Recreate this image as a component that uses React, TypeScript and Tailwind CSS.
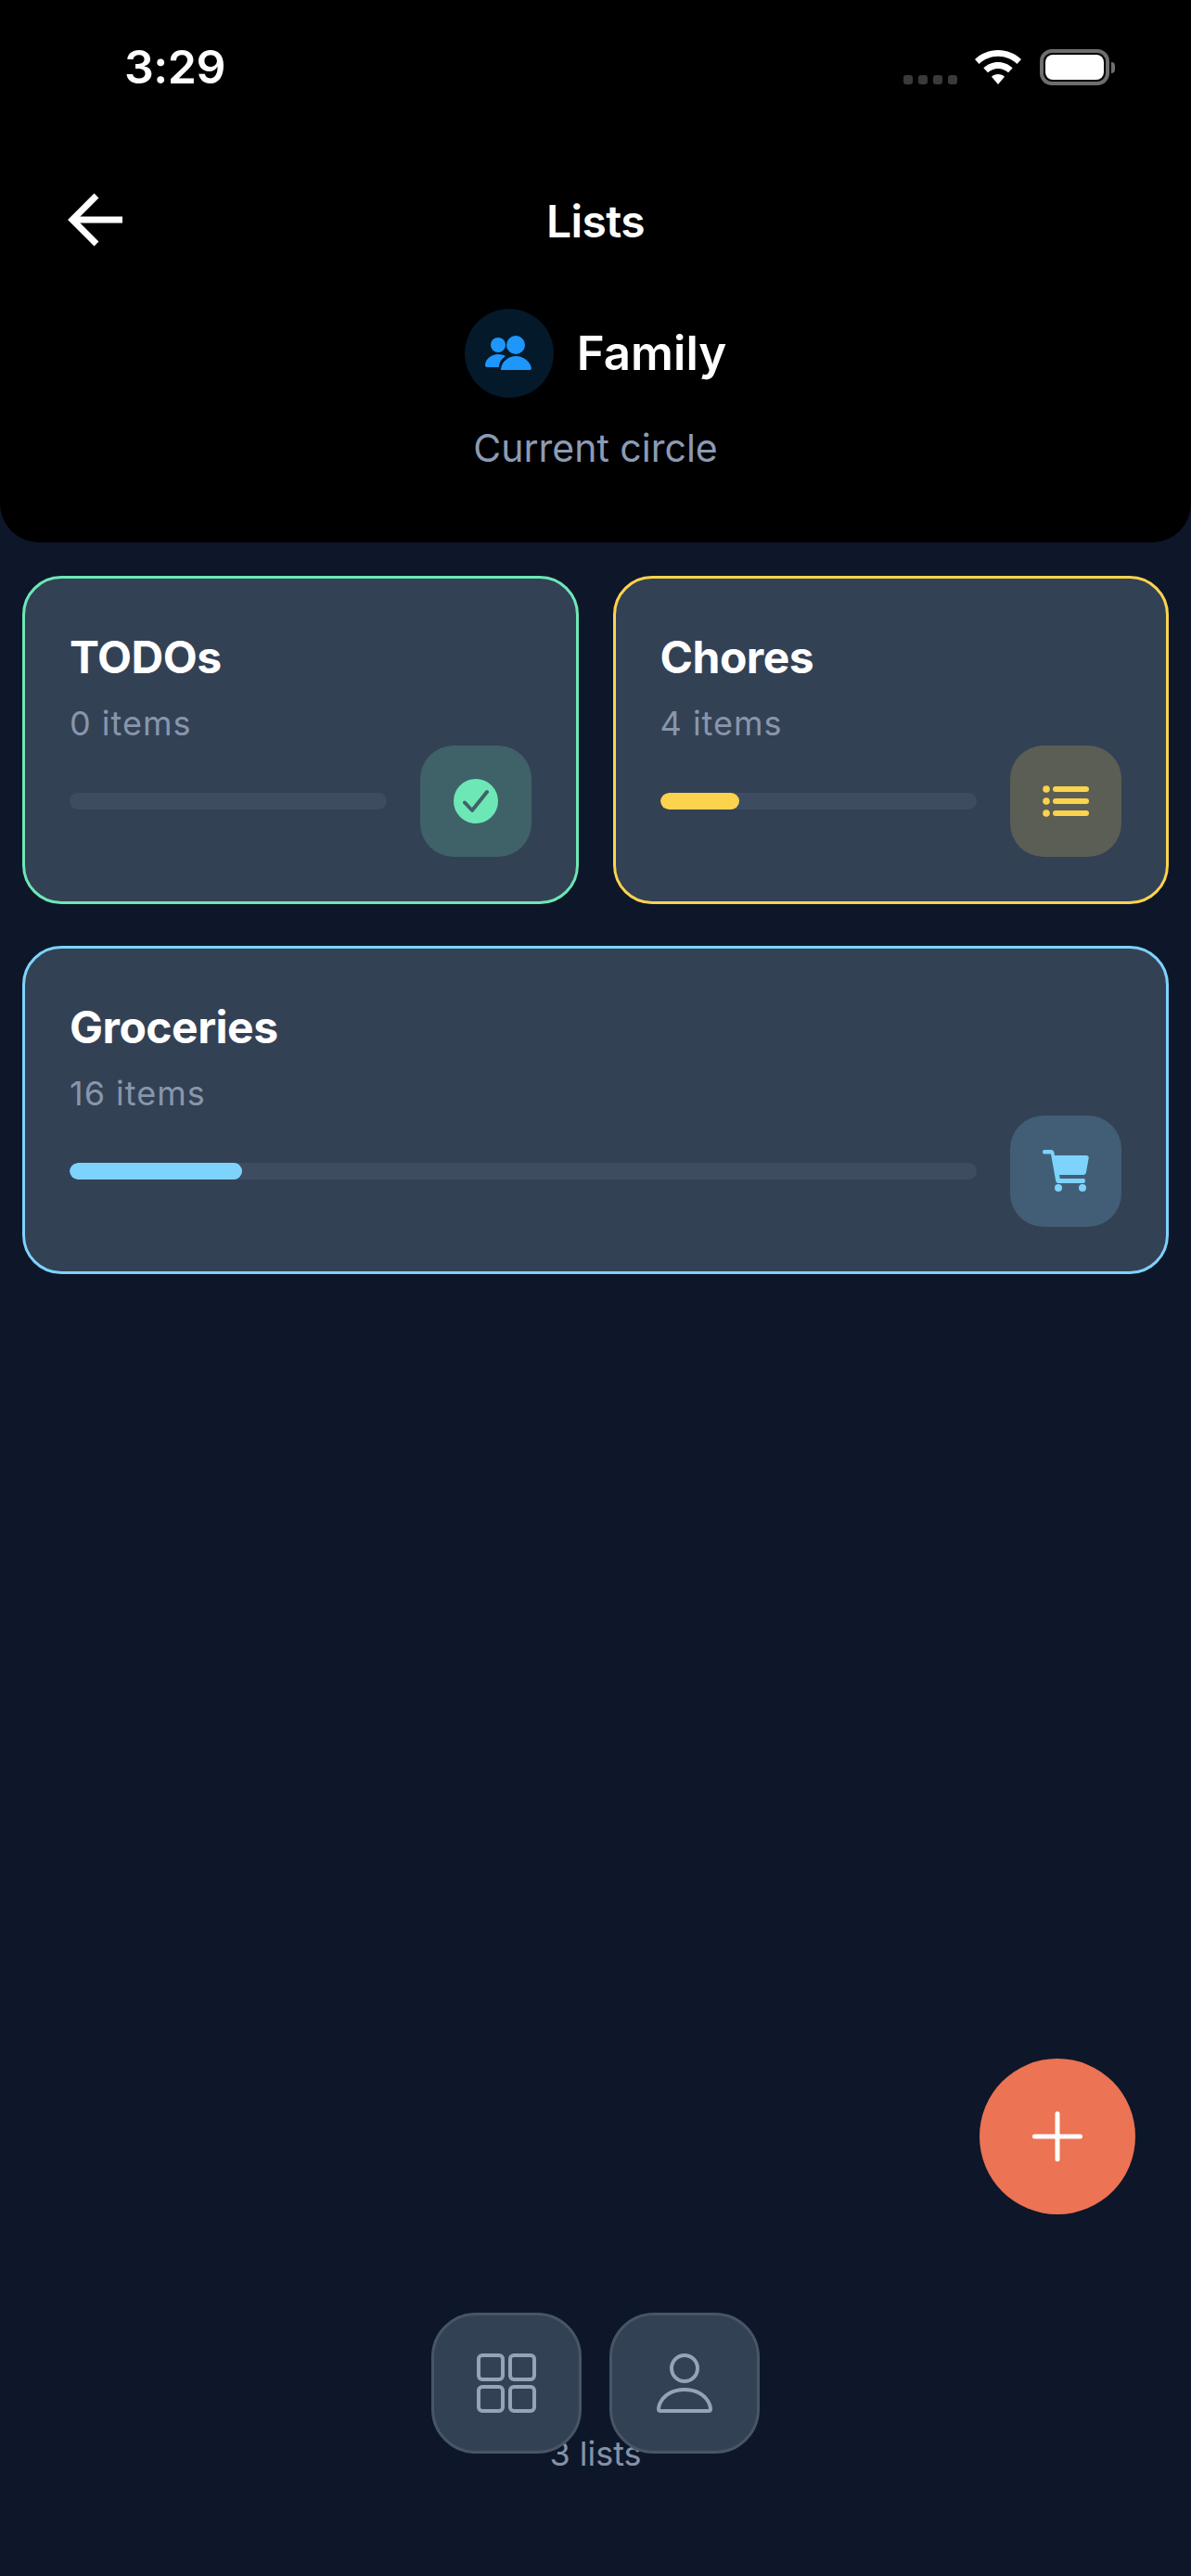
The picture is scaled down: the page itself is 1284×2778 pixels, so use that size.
import React from "react";

const GroupIcon = () => (
  <svg width="52" height="38" viewBox="0 0 52 38" fill="#1e96fc">
    <circle cx="14" cy="10" r="8" />
    <circle cx="33" cy="10" r="10" />
    <path d="M0 32c0-7 7-12 14-12 3 0 6 .8 8 2-4 3-6.500 6-6.900 11 0 .7-.5 1-1.100 1H2c-1.200 0-2-.8-2-2z" />
    <path d="M17 37c0-.5 0-1 .2-2 1-7 8-13 16-13s15 6 16.500 12c.4 1.700 0 3-1.700 3z" />
  </svg>
);

const CheckIcon = () => (
  <svg width="48" height="48" viewBox="0 0 48 48" fill="none">
    <circle cx="24" cy="24" r="24" fill="#6ee7b7" />
    <path d="M12 25.500 20 34 36 14" stroke="#3f6269" strokeWidth="4" strokeLinecap="round" strokeLinejoin="round" />
  </svg>
);

const ListIcon = () => (
  <svg width="50" height="34" viewBox="0 0 50 34" fill="#fcd34d">
    <circle cx="4" cy="4" r="3.800" />
    <circle cx="4" cy="17" r="3.800" />
    <circle cx="4" cy="30" r="3.800" />
    <rect x="11" y="1" width="39" height="6" rx="3" />
    <rect x="11" y="14" width="39" height="6" rx="3" />
    <rect x="11" y="27" width="39" height="6" rx="3" />
  </svg>
);

const CartIcon = () => (
  <svg width="50" height="46" viewBox="0 0 50 46" fill="#7dd3fc">
    <path d="M2 0H9c2 0 3 1 3.500 3l.5 3H47c2 0 3 1.500 2.700 3L47 24c-.3 2-1.500 3-3 3H18l.7 4H44c1.300 0 2 .8 2 2.200S45.300 36 44 36H17c-1.500 0-2.500-1-2.800-2.500L9 4.500H2C.8 4.500 0 3.500 0 2.200S.8 0 2 0z" />
    <circle cx="17" cy="41" r="4" />
    <circle cx="43" cy="41" r="4" />
  </svg>
);

const GridIcon = () => (
  <svg width="64" height="64" viewBox="0 0 64 64" fill="none" stroke="#94a3b8" strokeWidth="4">
    <rect x="2" y="2" width="26" height="26" rx="4" />
    <rect x="36" y="2" width="26" height="26" rx="4" />
    <rect x="2" y="36" width="26" height="26" rx="4" />
    <rect x="36" y="36" width="26" height="26" rx="4" />
  </svg>
);

const PersonIcon = () => (
  <svg width="60" height="64" viewBox="0 0 60 64" fill="none" stroke="#94a3b8" strokeWidth="4" strokeLinejoin="round">
    <circle cx="30" cy="16" r="14" />
    <path d="M2 60c0-2 .5-3.500 1-5 4-10 14-16 27-16s23 6 27 16c.5 1.500 1 3 1 5 0 1.300-.7 2-2 2H4c-1.300 0-2-.7-2-2z" />
  </svg>
);

function Card({ title, sub, border, iconBg, fill, pct, icon, className }: {
  title: string; sub: string; border: string; iconBg: string; fill: string; pct: string; icon: React.ReactNode; className?: string;
}) {
  return (
    <div className={`rounded-[42px] border-[3px] bg-[#334155] p-[48px] h-[354px] ${border} ${className ?? ""}`}>
      <div className="text-[48px] leading-[74px] h-[72px] font-bold tracking-[-0.5px] text-white">{title}</div>
      <div className="mt-[12px] text-[36px] leading-[48px] tracking-[1px] text-[#8896ab]">{sub}</div>
      <div className="flex items-center gap-[36px]">
        <div className="flex-1 h-[18px] rounded-full bg-[#3e4c62] overflow-hidden">
          <div className={`h-full rounded-full ${fill} ${pct}`} />
        </div>
        <div className={`w-[120px] h-[120px] rounded-[36px] flex items-center justify-center ${iconBg}`}>{icon}</div>
      </div>
    </div>
  );
}

export default function App() {
  return (
    <div className="relative w-[1284px] h-[2778px] bg-[#0e1729] overflow-hidden font-['Inter',sans-serif]">
      <header className="h-[585px] bg-black rounded-b-[42px] flex flex-col">
        <div className="h-[191px] pt-[39px] pl-[134px] pr-[82px] flex items-start justify-between">
          <span className="text-[50px] leading-[66px] font-semibold text-white tracking-[-0.5px]">3:29</span>
          <div className="flex items-start mt-[14px]">
            <div className="flex gap-[6px] mt-[28px]">
              <span className="w-[10px] h-[10px] rounded-[3px] bg-[#3a3a3a]" />
              <span className="w-[10px] h-[10px] rounded-[3px] bg-[#3a3a3a]" />
              <span className="w-[10px] h-[10px] rounded-[3px] bg-[#3a3a3a]" />
              <span className="w-[10px] h-[10px] rounded-[3px] bg-[#3a3a3a]" />
            </div>
            <svg className="ml-[19px] mt-[1px]" width="50" height="37" viewBox="0 0 50 37" fill="#fff">
              <path d="M25 0c9.500 0 18.500 3.700 25 10l-4.600 5C40 9.800 32.800 6.800 25 6.800S10 9.800 4.600 15L0 10C6.500 3.700 15.500 0 25 0z" />
              <path d="M25 13c6 0 11.500 2.300 15.700 6.300L36 24.300c-3-2.800-6.800-4.400-11-4.400s-8 1.600-11 4.400l-4.700-5C13.500 15.300 19 13 25 13z" />
              <path d="M25 26c2.700 0 5.200 1 7 2.700L25 37l-7-8.300c1.800-1.700 4.300-2.700 7-2.700z" />
            </svg>
            <div className="ml-[20px] flex items-center">
              <div className="w-[75px] h-[39px] rounded-[13px] border-[4px] border-[#6e6e6e] p-[2px] flex">
                <div className="flex-1 rounded-[8px] bg-white" />
              </div>
              <div className="w-[4px] h-[12px] rounded-r-full bg-[#6e6e6e] ml-[2px]" />
            </div>
          </div>
        </div>
        <div className="relative h-[92px] flex items-center justify-center">
          <svg className="absolute left-[73px] top-[14px]" width="62" height="64" viewBox="0 0 62 64" fill="none" stroke="#fff" strokeWidth="7">
            <path d="M31 6 5 32l26 26" />
            <path d="M8 32h51" />
          </svg>
          <span className="mt-[3px] text-[48px] leading-[60px] font-semibold text-white tracking-[-0.6px]">Lists</span>
        </div>
        <div className="mt-[50px] flex items-center justify-center gap-[25px]">
          <div className="w-[96px] h-[96px] rounded-full bg-[#04192a] flex items-center justify-center">
            <GroupIcon />
          </div>
          <span className="text-[51px] leading-[72px] font-semibold text-white">Family</span>
        </div>
        <div className="mt-[27px] text-center text-[41px] leading-[54px] text-[#8b9bb4]">Current circle</div>
      </header>

      <main className="px-[24px] pt-[36px] flex flex-col gap-[45px]">
        <div className="flex gap-[37px]">
          <Card className="flex-1" title="TODOs" sub="0 items" border="border-[#6ee7b7]" iconBg="bg-[#3f6269]" fill="bg-[#6ee7b7]" pct="w-0" icon={<CheckIcon />} />
          <Card className="flex-1" title="Chores" sub="4 items" border="border-[#fcd34d]" iconBg="bg-[#5b5e54]" fill="bg-[#fcd34d]" pct="w-1/4" icon={<ListIcon />} />
        </div>
        <Card title="Groceries" sub="16 items" border="border-[#7dd3fc]" iconBg="bg-[#425e76]" fill="bg-[#7dd3fc]" pct="w-[19%]" icon={<CartIcon />} />
      </main>

      <div className="absolute left-0 right-0 top-[2622px] text-center text-[36px] leading-[48px] text-[#8492a8]">3 lists</div>

      <div className="absolute left-[465px] top-[2494px] flex gap-[30px]">
        <div className="w-[162px] h-[152px] rounded-[48px] border-[3px] border-[#475569] bg-[#334155] flex items-center justify-center"><GridIcon /></div>
        <div className="w-[162px] h-[152px] rounded-[48px] border-[3px] border-[#475569] bg-[#334155] flex items-center justify-center"><PersonIcon /></div>
      </div>

      <button className="absolute left-[1056px] top-[2220px] w-[168px] h-[168px] rounded-full bg-[#ec7353] flex items-center justify-center">
        <svg width="54" height="54" viewBox="0 0 54 54" stroke="#fff" strokeWidth="5" strokeLinecap="round">
          <path d="M27 2.500v49M2.500 27h49" />
        </svg>
      </button>
    </div>
  );
}
